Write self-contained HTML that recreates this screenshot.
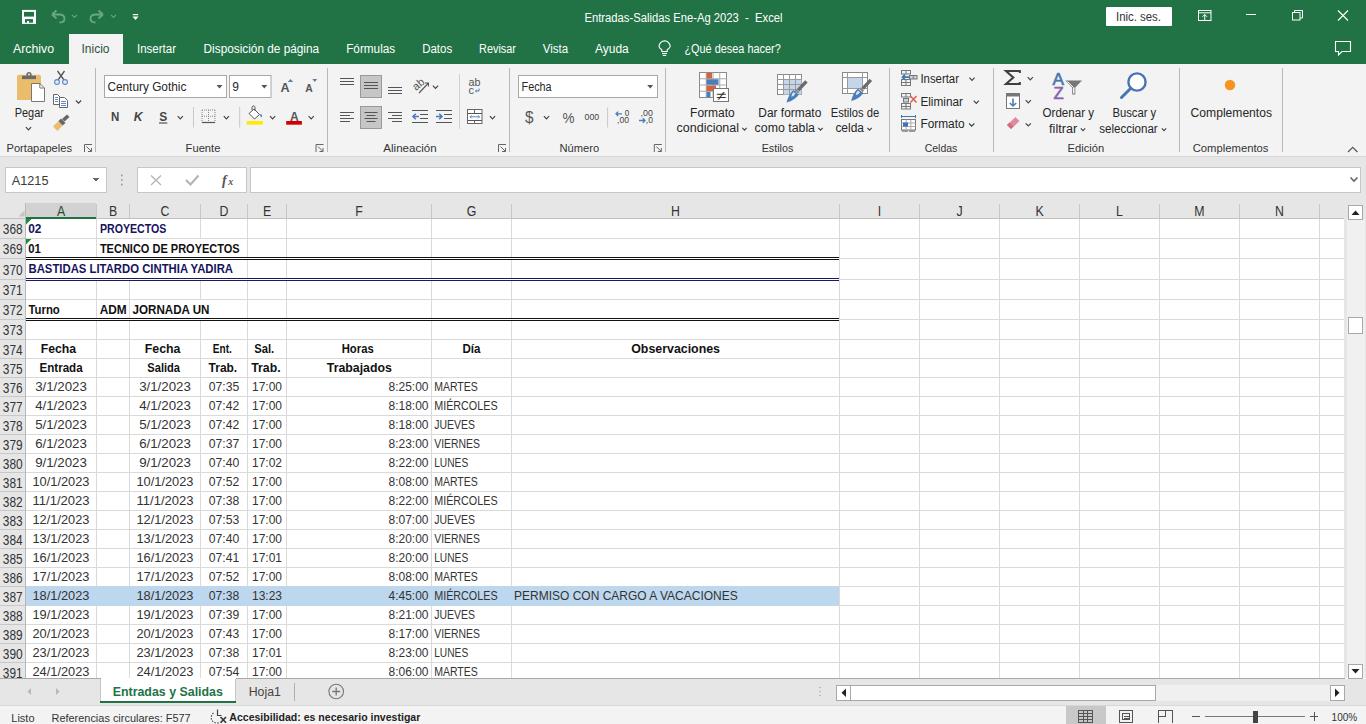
<!DOCTYPE html>
<html><head><meta charset="utf-8"><title>Entradas-Salidas Ene-Ag 2023 - Excel</title>
<style>
html,body{margin:0;padding:0;width:1366px;height:724px;overflow:hidden;background:#fff;}
svg{display:block;font-family:"Liberation Sans", sans-serif;}
text{font-family:"Liberation Sans", sans-serif;}
</style></head><body>
<svg width="1366" height="724" viewBox="0 0 1366 724" shape-rendering="crispEdges">
<rect x="0" y="0" width="1366" height="64" fill="#217346"/>
<g shape-rendering="geometricPrecision">
<rect x="23" y="10.9" width="12" height="12" fill="#ffffff" stroke="#ffffff" stroke-width="2"/>
<rect x="24" y="11.9" width="10" height="4.7" fill="#217346"/>
<rect x="25" y="19.1" width="8" height="3.6" fill="#217346"/>
<rect x="27" y="21" width="2" height="2" fill="#ffffff"/>
<path d="M52 14.5 L56.5 10.5 M52 14.5 L56.5 18.5 M52.5 14.5 L59 14.5 Q64.5 14.5 64.5 18.5 Q64.5 22.5 59.5 22.5" fill="none" stroke="#6aa784" stroke-width="1.8"/>
<path d="M72 15 L74.5 17.3 L77 15" fill="none" stroke="#6aa784" stroke-width="1.1"/>
<path d="M103 14.5 L98.5 10.5 M103 14.5 L98.5 18.5 M102.5 14.5 L96 14.5 Q90.5 14.5 90.5 18.5 Q90.5 22.5 95.5 22.5" fill="none" stroke="#6aa784" stroke-width="1.8"/>
<path d="M111 15 L113.5 17.3 L116 15" fill="none" stroke="#6aa784" stroke-width="1.1"/>
<rect x="132.8" y="14" width="5.4" height="1.2" fill="#ffffff"/>
<path d="M132.5 16.5 L138.5 16.5 L135.5 20 Z" fill="#ffffff"/>
<rect x="1106" y="7" width="66" height="19" fill="#ffffff" rx="1"/>
<text x="1138.5" y="21" font-size="12" fill="#333" text-anchor="middle" textLength="45" lengthAdjust="spacingAndGlyphs">Inic. ses.</text>
<rect x="1198.5" y="10.5" width="12.5" height="10" fill="none" stroke="#ffffff" stroke-width="1"/>
<line x1="1198.5" y1="12.8" x2="1211" y2="12.8" stroke="#ffffff" stroke-width="1"/>
<path d="M1204.75 20.5 L1204.75 14.5 M1202.5 16.8 L1204.75 14.5 L1207 16.8" fill="none" stroke="#ffffff" stroke-width="1"/>
<line x1="1246" y1="14.5" x2="1256" y2="14.5" stroke="#ffffff" stroke-width="1"/>
<rect x="1292.5" y="12.5" width="7.5" height="7.5" fill="none" stroke="#ffffff" stroke-width="1"/>
<path d="M1294.5 12.5 L1294.5 10.5 L1302.5 10.5 L1302.5 18 L1300 18" fill="none" stroke="#ffffff" stroke-width="1"/>
<path d="M1338 10.5 L1348 20.5 M1348 10.5 L1338 20.5" fill="none" stroke="#ffffff" stroke-width="1.1"/>
<path d="M1335.5 41.5 L1350.5 41.5 L1350.5 51.5 L1342 51.5 L1338.5 55 L1338.5 51.5 L1335.5 51.5 Z" fill="none" stroke="#ffffff" stroke-width="1.1"/>
</g>
<text x="584.5" y="22" font-size="12" fill="#ffffff" text-anchor="start" textLength="198" lengthAdjust="spacingAndGlyphs" xml:space="preserve">Entradas-Salidas Ene-Ag 2023  -  Excel</text>
<rect x="69" y="34" width="54" height="30" fill="#f3f3f3"/>
<text x="13" y="53.4" font-size="12.5" fill="#ffffff" text-anchor="start" textLength="41" lengthAdjust="spacingAndGlyphs">Archivo</text>
<text x="81.5" y="53.4" font-size="12.5" fill="#2f4f3e" text-anchor="start" textLength="28" lengthAdjust="spacingAndGlyphs">Inicio</text>
<text x="137" y="53.4" font-size="12.5" fill="#ffffff" text-anchor="start" textLength="39" lengthAdjust="spacingAndGlyphs">Insertar</text>
<text x="203.6" y="53.4" font-size="12.5" fill="#ffffff" text-anchor="start" textLength="115.5" lengthAdjust="spacingAndGlyphs">Disposición de página</text>
<text x="346.2" y="53.4" font-size="12.5" fill="#ffffff" text-anchor="start" textLength="49" lengthAdjust="spacingAndGlyphs">Fórmulas</text>
<text x="422.2" y="53.4" font-size="12.5" fill="#ffffff" text-anchor="start" textLength="30" lengthAdjust="spacingAndGlyphs">Datos</text>
<text x="479" y="53.4" font-size="12.5" fill="#ffffff" text-anchor="start" textLength="37" lengthAdjust="spacingAndGlyphs">Revisar</text>
<text x="542.7" y="53.4" font-size="12.5" fill="#ffffff" text-anchor="start" textLength="25.4" lengthAdjust="spacingAndGlyphs">Vista</text>
<text x="595" y="53.4" font-size="12.5" fill="#ffffff" text-anchor="start" textLength="33.7" lengthAdjust="spacingAndGlyphs">Ayuda</text>
<text x="684.4" y="53.4" font-size="12.5" fill="#ffffff" text-anchor="start" textLength="96.4" lengthAdjust="spacingAndGlyphs">¿Qué desea hacer?</text>
<g shape-rendering="geometricPrecision">
<path d="M661.8 51.5 L661.8 49.8 Q659 47.8 659 46.5 A5.6 5.6 0 1 1 670.2 46.5 Q670 47.8 667.2 49.8 L667.2 51.5 Z" fill="none" stroke="#ffffff" stroke-width="1.1"/>
<line x1="662" y1="53.5" x2="667" y2="53.5" stroke="#ffffff" stroke-width="1.1"/>
<line x1="662.8" y1="55.5" x2="666.2" y2="55.5" stroke="#ffffff" stroke-width="1.1"/>
</g>
<rect x="0" y="64" width="1366" height="92" fill="#f3f3f3"/>
<rect x="0" y="156" width="1366" height="1" fill="#d6d6d6"/>
<line x1="95.5" y1="68" x2="95.5" y2="152" stroke="#b8b8b8" stroke-width="1"/>
<line x1="327.5" y1="68" x2="327.5" y2="152" stroke="#b8b8b8" stroke-width="1"/>
<line x1="509.5" y1="68" x2="509.5" y2="152" stroke="#b8b8b8" stroke-width="1"/>
<line x1="665.5" y1="68" x2="665.5" y2="152" stroke="#b8b8b8" stroke-width="1"/>
<line x1="889.5" y1="68" x2="889.5" y2="152" stroke="#b8b8b8" stroke-width="1"/>
<line x1="993.5" y1="68" x2="993.5" y2="152" stroke="#b8b8b8" stroke-width="1"/>
<line x1="1179.5" y1="68" x2="1179.5" y2="152" stroke="#b8b8b8" stroke-width="1"/>
<line x1="1282.5" y1="68" x2="1282.5" y2="152" stroke="#b8b8b8" stroke-width="1"/>
<text x="6.5" y="151.7" font-size="11.5" fill="#333" text-anchor="start" textLength="65.5" lengthAdjust="spacingAndGlyphs">Portapapeles</text>
<text x="185.6" y="151.7" font-size="11.5" fill="#333" text-anchor="start" textLength="34.8" lengthAdjust="spacingAndGlyphs">Fuente</text>
<text x="383.3" y="151.7" font-size="11.5" fill="#333" text-anchor="start" textLength="53.3" lengthAdjust="spacingAndGlyphs">Alineación</text>
<text x="559.5" y="151.7" font-size="11.5" fill="#333" text-anchor="start" textLength="39.7" lengthAdjust="spacingAndGlyphs">Número</text>
<text x="761.7" y="151.7" font-size="11.5" fill="#333" text-anchor="start" textLength="31.6" lengthAdjust="spacingAndGlyphs">Estilos</text>
<text x="924.7" y="151.7" font-size="11.5" fill="#333" text-anchor="start" textLength="32.7" lengthAdjust="spacingAndGlyphs">Celdas</text>
<text x="1067.6" y="151.7" font-size="11.5" fill="#333" text-anchor="start" textLength="36.7" lengthAdjust="spacingAndGlyphs">Edición</text>
<text x="1192.7" y="151.7" font-size="11.5" fill="#333" text-anchor="start" textLength="75.8" lengthAdjust="spacingAndGlyphs">Complementos</text>
<g shape-rendering="geometricPrecision">
<path d="M84.5 152.0 L84.5 144.5 L92.0 144.5 " fill="none" stroke="#666" stroke-width="1"/>
<path d="M86.5 146.5 L91.5 151.5 M91.5 148.0 L91.5 151.5 L88.0 151.5" fill="none" stroke="#666" stroke-width="1"/>
<path d="M316 152.0 L316 144.5 L323.5 144.5 " fill="none" stroke="#666" stroke-width="1"/>
<path d="M318 146.5 L323 151.5 M323 148.0 L323 151.5 L319.5 151.5" fill="none" stroke="#666" stroke-width="1"/>
<path d="M498.5 152.0 L498.5 144.5 L506.0 144.5 " fill="none" stroke="#666" stroke-width="1"/>
<path d="M500.5 146.5 L505.5 151.5 M505.5 148.0 L505.5 151.5 L502.0 151.5" fill="none" stroke="#666" stroke-width="1"/>
<path d="M654.3 152.0 L654.3 144.5 L661.8 144.5 " fill="none" stroke="#666" stroke-width="1"/>
<path d="M656.3 146.5 L661.3 151.5 M661.3 148.0 L661.3 151.5 L657.8 151.5" fill="none" stroke="#666" stroke-width="1"/>
<path d="M17 76.5 Q17 74.8 18.7 74.8 L39.3 74.8 Q41 74.8 41 76.5 L41 100 L17 100 Z" fill="#e9bd6c"/>
<rect x="22" y="75.7" width="14" height="3.4" fill="#6b6b6b"/>
<circle cx="29" cy="74.6" r="2.6" fill="#6b6b6b"/><circle cx="29" cy="74.6" r="1" fill="#f3f3f3"/>
<path d="M31.5 83.5 L39.8 83.5 L44.5 88 L44.5 101.5 L31.5 101.5 Z" fill="#ffffff" stroke="#777" stroke-width="1"/>
<path d="M39.8 83.5 L39.8 88 L44.5 88" fill="none" stroke="#777" stroke-width="1"/>
<text x="14.7" y="116.5" font-size="12" fill="#262626" text-anchor="start" textLength="29.2" lengthAdjust="spacingAndGlyphs">Pegar</text>
<path d="M25.9 127.2 L28.5 129.8 L31.1 127.2" fill="none" stroke="#444" stroke-width="1.2"/>
<path d="M57.5 71 L64 80 M64.5 71 L58 80" fill="none" stroke="#555" stroke-width="1.3"/>
<circle cx="57" cy="82" r="2.4" fill="#e4ecf6" stroke="#5b8bc9" stroke-width="1.1"/><circle cx="65" cy="82" r="2.4" fill="#e4ecf6" stroke="#5b8bc9" stroke-width="1.1"/>
<path d="M53.5 94.5 L57.5 94.5 L60 97 L60 104.5 L53.5 104.5 Z" fill="#fff" stroke="#666" stroke-width="1"/>
<path d="M59.5 97.5 L64.5 97.5 L67.5 100.5 L67.5 107.5 L59.5 107.5 Z" fill="#fff" stroke="#666" stroke-width="1"/>
<line x1="55" y1="97.5" x2="58" y2="97.5" stroke="#5b8bc9" stroke-width="1"/>
<line x1="55" y1="99.5" x2="58" y2="99.5" stroke="#5b8bc9" stroke-width="1"/>
<line x1="55" y1="101.5" x2="58" y2="101.5" stroke="#5b8bc9" stroke-width="1"/>
<line x1="61" y1="101.5" x2="66" y2="101.5" stroke="#5b8bc9" stroke-width="1"/>
<line x1="61" y1="103.5" x2="66" y2="103.5" stroke="#5b8bc9" stroke-width="1"/>
<line x1="61" y1="105.5" x2="66" y2="105.5" stroke="#5b8bc9" stroke-width="1"/>
<path d="M75.9 100.5 L78.5 103.1 L81.1 100.5" fill="none" stroke="#444" stroke-width="1.2"/>
<path d="M58.5 121 L53 126.5 L57.5 131 L62.5 125.5 Z" fill="#e9bd6c"/>
<path d="M58.5 121 L61 118.5 L65.5 123 L62.5 125.5 Z" fill="#666"/>
<path d="M62 119 L67 114.5 L69.5 117 L64.5 121.5 Z" fill="#666"/>
<rect x="104.5" y="75.5" width="122" height="22" fill="#ffffff" stroke="#a8a8a8" stroke-width="1"/>
<text x="107.4" y="91.2" font-size="12" fill="#262626" text-anchor="start" textLength="79" lengthAdjust="spacingAndGlyphs">Century Gothic</text>
<path d="M216.5 85.0 L222.5 85.0 L219.5 88.5 Z" fill="#555"/>
<rect x="229.5" y="75.5" width="41.5" height="22" fill="#ffffff" stroke="#a8a8a8" stroke-width="1"/>
<text x="232.2" y="91.2" font-size="12" fill="#262626" text-anchor="start">9</text>
<path d="M261.3 85.0 L267.3 85.0 L264.3 88.5 Z" fill="#555"/>
<text x="280.4" y="92" font-size="13.5" fill="#555" font-weight="bold" text-anchor="start" textLength="9.1" lengthAdjust="spacingAndGlyphs">A</text>
<path d="M287.8 82 L293.2 82 L290.5 79 Z" fill="#5a7fa8"/>
<text x="305.2" y="92" font-size="11" fill="#555" font-weight="bold" text-anchor="start" textLength="7.5" lengthAdjust="spacingAndGlyphs">A</text>
<path d="M312.3 79 L317.2 79 L314.75 82 Z" fill="#5a7fa8"/>
<text x="111" y="121.2" font-size="12" fill="#444" font-weight="bold" text-anchor="start" textLength="8.3" lengthAdjust="spacingAndGlyphs">N</text>
<text x="133.8" y="121.2" font-size="12" fill="#444" font-weight="bold" text-anchor="start" textLength="8.8" lengthAdjust="spacingAndGlyphs" font-style="italic">K</text>
<text x="159.2" y="121.2" font-size="12" fill="#444" font-weight="bold" text-anchor="start" textLength="8" lengthAdjust="spacingAndGlyphs">S</text>
<line x1="159" y1="123" x2="167.3" y2="123" stroke="#444" stroke-width="1.1"/>
<path d="M177.70000000000002 116.2 L180.3 118.8 L182.9 116.2" fill="none" stroke="#444" stroke-width="1.2"/>
<line x1="193.5" y1="107" x2="193.5" y2="127.5" stroke="#c8c8c8" stroke-width="1"/>
<path d="M202 110 L215 110 M202 122.5 L215 122.5 M202 110 L202 122.5 M215 110 L215 122.5 M208.5 110 L208.5 122.5 M202 116.25 L215 116.25" fill="none" stroke="#888" stroke-width="1" stroke-dasharray="1 1"/>
<line x1="202" y1="122.5" x2="215" y2="122.5" stroke="#555" stroke-width="1.2"/>
<path d="M223.8 116.2 L226.4 118.8 L229.0 116.2" fill="none" stroke="#444" stroke-width="1.2"/>
<line x1="239.7" y1="107" x2="239.7" y2="127.5" stroke="#c8c8c8" stroke-width="1"/>
<path d="M249 113.5 L254 109 L259.5 114.5 L254.5 119 Z" fill="#fff" stroke="#555" stroke-width="1"/>
<path d="M252 110 L252 107.5 Q252 106 253.5 106 Q255 106 255 107.5 L255 111" fill="none" stroke="#555" stroke-width="1"/>
<path d="M259.5 114.5 Q262.5 113 262 117.5 Q260 116 259.5 114.5 Z" fill="#4a7ebb"/>
<rect x="246.7" y="121" width="16.2" height="3.6" fill="#ffea00"/>
<path d="M270.0 116.2 L272.6 118.8 L275.20000000000005 116.2" fill="none" stroke="#444" stroke-width="1.2"/>
<text x="289.9" y="121" font-size="13.5" fill="#555" font-weight="bold" text-anchor="start" textLength="8.7" lengthAdjust="spacingAndGlyphs">A</text>
<rect x="286.2" y="121" width="15.7" height="3.7" fill="#d40000"/>
<path d="M308.59999999999997 116.2 L311.2 118.8 L313.8 116.2" fill="none" stroke="#444" stroke-width="1.2"/>
<rect x="340" y="78" width="14" height="1" fill="#555"/>
<rect x="340" y="81" width="14" height="1" fill="#555"/>
<rect x="340" y="84" width="14" height="1" fill="#555"/>
<rect x="360.5" y="75.5" width="21" height="22" fill="#c6c6c6" stroke="#9a9a9a" stroke-width="1"/>
<rect x="364" y="82" width="14" height="1" fill="#555"/>
<rect x="364" y="85" width="14" height="1" fill="#555"/>
<rect x="364" y="88" width="14" height="1" fill="#555"/>
<rect x="388" y="87" width="14" height="1" fill="#555"/>
<rect x="388" y="90" width="14" height="1" fill="#555"/>
<rect x="388" y="93" width="14" height="1" fill="#555"/>
<text x="412" y="88" font-size="11" fill="#555" text-anchor="start" transform="rotate(-40 418 84)">ab</text>
<path d="M419 93 L428.5 83 M425 83 L428.5 83 L428.5 86.5" fill="none" stroke="#555" stroke-width="1.1"/>
<path d="M432.9 85.7 L435.5 88.3 L438.1 85.7" fill="none" stroke="#444" stroke-width="1.2"/>
<rect x="459" y="74" width="1" height="55" fill="#d0d0d0"/>
<text x="468.6" y="86" font-size="11" fill="#555" text-anchor="start" textLength="12" lengthAdjust="spacingAndGlyphs">ab</text>
<text x="468.6" y="93.5" font-size="11" fill="#555" text-anchor="start">c</text>
<path d="M479 88.5 L479 91 L475.5 91 M476.8 89.8 L475.5 91 L476.8 92.2" fill="none" stroke="#4a7ebb" stroke-width="1"/>
<rect x="340" y="112" width="14" height="1" fill="#555"/>
<rect x="340" y="115" width="10" height="1" fill="#555"/>
<rect x="340" y="118" width="14" height="1" fill="#555"/>
<rect x="340" y="121" width="10" height="1" fill="#555"/>
<rect x="360.5" y="106.5" width="21" height="22" fill="#c6c6c6" stroke="#9a9a9a" stroke-width="1"/>
<rect x="364.5" y="112" width="13.0" height="1" fill="#555"/>
<rect x="366.5" y="115" width="9.0" height="1" fill="#555"/>
<rect x="364.5" y="118" width="13.0" height="1" fill="#555"/>
<rect x="366.5" y="121" width="9.0" height="1" fill="#555"/>
<rect x="388" y="112" width="14" height="1" fill="#555"/>
<rect x="392" y="115" width="10" height="1" fill="#555"/>
<rect x="388" y="118" width="14" height="1" fill="#555"/>
<rect x="392" y="121" width="10" height="1" fill="#555"/>
<rect x="412" y="110" width="16" height="1" fill="#555"/>
<rect x="412" y="122" width="16" height="1" fill="#555"/>
<rect x="420" y="114" width="8" height="1" fill="#555"/>
<rect x="420" y="118" width="8" height="1" fill="#555"/>
<path d="M419 116.5 L413 116.5 M415.8 113.7 L413 116.5 L415.8 119.3" fill="none" stroke="#4a7ebb" stroke-width="1.6"/>
<rect x="436" y="110" width="16" height="1" fill="#555"/>
<rect x="436" y="122" width="16" height="1" fill="#555"/>
<rect x="444" y="114" width="8" height="1" fill="#555"/>
<rect x="444" y="118" width="8" height="1" fill="#555"/>
<path d="M436 116.5 L442 116.5 M439.2 113.7 L442 116.5 L439.2 119.3" fill="none" stroke="#4a7ebb" stroke-width="1.6"/>
<rect x="467.5" y="109.5" width="14.5" height="14" fill="#fff" stroke="#666" stroke-width="1"/>
<rect x="468" y="113" width="14" height="1" fill="#555"/>
<rect x="468" y="120" width="14" height="1" fill="#555"/>
<rect x="474" y="109.5" width="1" height="3.5" fill="#666"/>
<rect x="474" y="120.5" width="1" height="3" fill="#666"/>
<path d="M470 116.8 L479.5 116.8 M471.5 115.3 L470 116.8 L471.5 118.3 M478 115.3 L479.5 116.8 L478 118.3" fill="none" stroke="#4a7ebb" stroke-width="0.9"/>
<path d="M489.9 116.2 L492.5 118.8 L495.1 116.2" fill="none" stroke="#444" stroke-width="1.2"/>
<rect x="518.5" y="75.5" width="139" height="22" fill="#ffffff" stroke="#a8a8a8" stroke-width="1"/>
<text x="521.6" y="90.8" font-size="12" fill="#262626" text-anchor="start" textLength="30" lengthAdjust="spacingAndGlyphs">Fecha</text>
<path d="M647.2 85.0 L653.2 85.0 L650.2 88.5 Z" fill="#555"/>
<text x="525" y="122.5" font-size="16" fill="#555" text-anchor="start" textLength="8.5" lengthAdjust="spacingAndGlyphs">$</text>
<path d="M543.9 116.2 L546.5 118.8 L549.1 116.2" fill="none" stroke="#444" stroke-width="1.2"/>
<text x="562.5" y="122.6" font-size="14" fill="#555" text-anchor="start" textLength="12" lengthAdjust="spacingAndGlyphs">%</text>
<text x="584.6" y="119.8" font-size="9" fill="#444" text-anchor="start" textLength="14.6" lengthAdjust="spacingAndGlyphs">000</text>
<line x1="607.6" y1="107.5" x2="607.6" y2="127.5" stroke="#c8c8c8" stroke-width="1"/>
<text x="624.8" y="116.2" font-size="8.5" fill="#444" text-anchor="start" textLength="4.5" lengthAdjust="spacingAndGlyphs">0</text>
<text x="617" y="122.8" font-size="8.5" fill="#444" text-anchor="start" textLength="12" lengthAdjust="spacingAndGlyphs">,00</text>
<path d="M622 113.8 L616 113.8 M618.2 111.6 L616 113.8 L618.2 116" fill="none" stroke="#4a7ebb" stroke-width="1.3"/>
<text x="640.6" y="116.2" font-size="8.5" fill="#444" text-anchor="start" textLength="12.3" lengthAdjust="spacingAndGlyphs">,00</text>
<text x="645.8" y="122.8" font-size="8.5" fill="#444" text-anchor="start" textLength="7.1" lengthAdjust="spacingAndGlyphs">,0</text>
<path d="M639 120.5 L645 120.5 M642.8 118.3 L645 120.5 L642.8 122.7" fill="none" stroke="#4a7ebb" stroke-width="1.3"/>
</g>
<g shape-rendering="geometricPrecision">
<rect x="699.5" y="72.5" width="27" height="25" fill="#fff" stroke="#8a8a8a" stroke-width="1"/>
<line x1="706.25" y1="72.5" x2="706.25" y2="97.5" stroke="#a8a8a8" stroke-width="1"/>
<line x1="713.0" y1="72.5" x2="713.0" y2="97.5" stroke="#a8a8a8" stroke-width="1"/>
<line x1="719.75" y1="72.5" x2="719.75" y2="97.5" stroke="#a8a8a8" stroke-width="1"/>
<line x1="699.5" y1="78.75" x2="726.5" y2="78.75" stroke="#a8a8a8" stroke-width="1"/>
<line x1="699.5" y1="85.0" x2="726.5" y2="85.0" stroke="#a8a8a8" stroke-width="1"/>
<line x1="699.5" y1="91.25" x2="726.5" y2="91.25" stroke="#a8a8a8" stroke-width="1"/>
<rect x="706.5" y="73.0" width="5.5" height="5.5" fill="#d5643a"/>
<rect x="706.5" y="79.25" width="12" height="5.5" fill="#4a7ebb"/>
<rect x="706.5" y="85.5" width="9.5" height="5.5" fill="#d5643a"/>
<rect x="706.5" y="91.75" width="4" height="5.5" fill="#4a7ebb"/>
<rect x="713.5" y="88.5" width="15" height="13" fill="#fff" stroke="#777" stroke-width="1"/>
<text x="716" y="99.5" font-size="13" fill="#333" text-anchor="start" textLength="10" lengthAdjust="spacingAndGlyphs">≠</text>
<text x="690.1" y="116.5" font-size="12" fill="#262626" text-anchor="start" textLength="44.6" lengthAdjust="spacingAndGlyphs">Formato</text>
<text x="676.6" y="132.2" font-size="12" fill="#262626" text-anchor="start" textLength="62.4" lengthAdjust="spacingAndGlyphs">condicional</text>
<path d="M742.3 127.9 L744.5 130.1 L746.7 127.9" fill="none" stroke="#444" stroke-width="1.2"/>
<rect x="777.5" y="74.5" width="24" height="20" fill="#fff" stroke="#8a8a8a" stroke-width="1"/>
<rect x="783.5" y="79.5" width="18" height="15" fill="#c5d6ea"/>
<line x1="783.5" y1="74.5" x2="783.5" y2="94.5" stroke="#9a9a9a" stroke-width="1"/>
<line x1="789.5" y1="74.5" x2="789.5" y2="94.5" stroke="#9a9a9a" stroke-width="1"/>
<line x1="795.5" y1="74.5" x2="795.5" y2="94.5" stroke="#9a9a9a" stroke-width="1"/>
<line x1="777.5" y1="79.5" x2="801.5" y2="79.5" stroke="#9a9a9a" stroke-width="1"/>
<line x1="777.5" y1="84.5" x2="801.5" y2="84.5" stroke="#9a9a9a" stroke-width="1"/>
<line x1="777.5" y1="89.5" x2="801.5" y2="89.5" stroke="#9a9a9a" stroke-width="1"/>
<g transform="translate(796.5 92) rotate(-47)"><rect x="2.5" y="-1.7" width="12" height="3.4" fill="#6b6b6b"/><rect x="0" y="-2.2" width="2" height="4.4" fill="#8a8a8a"/><path d="M-0.5 -3.6 L-0.5 3.6 Q-7 4.5 -14.5 0 Q-7 -4.5 -0.5 -3.6 Z" fill="#4a7ebb"/><path d="M-2 -2.2 L-2 0.5 Q-5 1 -7 -0.5 Q-5 -2.5 -2 -2.2 Z" fill="#d6e4f4"/></g>
<text x="758.3" y="116.5" font-size="12" fill="#262626" text-anchor="start" textLength="63" lengthAdjust="spacingAndGlyphs">Dar formato</text>
<text x="754.6" y="132.2" font-size="12" fill="#262626" text-anchor="start" textLength="60.4" lengthAdjust="spacingAndGlyphs">como tabla</text>
<path d="M818.3 127.9 L820.5 130.1 L822.7 127.9" fill="none" stroke="#444" stroke-width="1.2"/>
<rect x="842.5" y="72.5" width="25" height="21" fill="#fff" stroke="#8a8a8a" stroke-width="1"/>
<rect x="847.5" y="77.5" width="15" height="11" fill="#c5d6ea"/>
<line x1="842.5" y1="77.5" x2="867.5" y2="77.5" stroke="#9a9a9a" stroke-width="1"/>
<line x1="842.5" y1="88.5" x2="867.5" y2="88.5" stroke="#9a9a9a" stroke-width="1"/>
<line x1="847.5" y1="72.5" x2="847.5" y2="93.5" stroke="#9a9a9a" stroke-width="1"/>
<line x1="862.5" y1="72.5" x2="862.5" y2="93.5" stroke="#9a9a9a" stroke-width="1"/>
<g transform="translate(861 90.5) rotate(-47)"><rect x="2.5" y="-1.7" width="12" height="3.4" fill="#6b6b6b"/><rect x="0" y="-2.2" width="2" height="4.4" fill="#8a8a8a"/><path d="M-0.5 -3.6 L-0.5 3.6 Q-7 4.5 -14.5 0 Q-7 -4.5 -0.5 -3.6 Z" fill="#4a7ebb"/><path d="M-2 -2.2 L-2 0.5 Q-5 1 -7 -0.5 Q-5 -2.5 -2 -2.2 Z" fill="#d6e4f4"/></g>
<text x="830.7" y="116.5" font-size="12" fill="#262626" text-anchor="start" textLength="48.5" lengthAdjust="spacingAndGlyphs">Estilos de</text>
<text x="835.4" y="132.2" font-size="12" fill="#262626" text-anchor="start" textLength="28.6" lengthAdjust="spacingAndGlyphs">celda</text>
<path d="M867.3 127.9 L869.5 130.1 L871.7 127.9" fill="none" stroke="#444" stroke-width="1.2"/>
<rect x="901.5" y="70.5" width="9" height="3.5" fill="none" stroke="#777" stroke-width="1"/>
<line x1="906.0" y1="70.5" x2="906.0" y2="74.0" stroke="#777" stroke-width="1"/>
<rect x="901.5" y="79.5" width="9" height="3" fill="none" stroke="#777" stroke-width="1"/>
<line x1="906.0" y1="79.5" x2="906.0" y2="82.5" stroke="#777" stroke-width="1"/>
<rect x="901.5" y="82.5" width="9" height="3" fill="none" stroke="#777" stroke-width="1"/>
<line x1="906.0" y1="82.5" x2="906.0" y2="85.5" stroke="#777" stroke-width="1"/>
<rect x="909.5" y="75.5" width="7.5" height="3.5" fill="#c9d5e3" stroke="#777" stroke-width="1"/>
<line x1="913.25" y1="75.5" x2="913.25" y2="79.0" stroke="#777" stroke-width="1"/>
<g shape-rendering="geometricPrecision">
<path d="M909 77.2 L902.5 77.2 M905 74.6 L902.5 77.2 L905 79.8" fill="none" stroke="#3b74b8" stroke-width="1.7"/>
</g>
<text x="920.4" y="82.8" font-size="12" fill="#262626" text-anchor="start" textLength="38.6" lengthAdjust="spacingAndGlyphs">Insertar</text>
<path d="M969.4 77.7 L972 80.3 L974.6 77.7" fill="none" stroke="#444" stroke-width="1.2"/>
<rect x="901.5" y="93.5" width="9" height="3.5" fill="none" stroke="#777" stroke-width="1"/>
<line x1="906.0" y1="93.5" x2="906.0" y2="97.0" stroke="#777" stroke-width="1"/>
<rect x="901.5" y="103.5" width="9" height="3" fill="none" stroke="#777" stroke-width="1"/>
<line x1="906.0" y1="103.5" x2="906.0" y2="106.5" stroke="#777" stroke-width="1"/>
<rect x="901.5" y="106.5" width="9" height="2.5" fill="none" stroke="#777" stroke-width="1"/>
<line x1="906.0" y1="106.5" x2="906.0" y2="109.0" stroke="#777" stroke-width="1"/>
<rect x="903.5" y="98.5" width="5" height="3.5" fill="#c9d5e3" stroke="#777" stroke-width="1"/>
<g shape-rendering="geometricPrecision">
<path d="M910.5 96 L916.5 102.5 M916.5 96 L910.5 102.5" fill="none" stroke="#e0604c" stroke-width="1.5"/>
</g>
<text x="920.4" y="105.8" font-size="12" fill="#262626" text-anchor="start" textLength="42.5" lengthAdjust="spacingAndGlyphs">Eliminar</text>
<path d="M973.6999999999999 100.7 L976.3 103.3 L978.9 100.7" fill="none" stroke="#444" stroke-width="1.2"/>
<rect x="901.5" y="119.5" width="14" height="10.5" fill="#fff" stroke="#777" stroke-width="1"/>
<line x1="906.17" y1="119.5" x2="906.17" y2="130" stroke="#aaa" stroke-width="1"/>
<line x1="910.84" y1="119.5" x2="910.84" y2="130" stroke="#aaa" stroke-width="1"/>
<line x1="901.5" y1="123.0" x2="915.5" y2="123.0" stroke="#aaa" stroke-width="1"/>
<line x1="901.5" y1="126.5" x2="915.5" y2="126.5" stroke="#aaa" stroke-width="1"/>
<rect x="903" y="122.5" width="5" height="4" fill="#3b74b8"/>
<rect x="902" y="130.5" width="6" height="1.2" fill="#777"/>
<rect x="909" y="130.5" width="6" height="1.2" fill="#777"/>
<line x1="902" y1="116.5" x2="915" y2="116.5" stroke="#3b74b8" stroke-width="1"/>
<line x1="901.5" y1="115" x2="901.5" y2="118" stroke="#3b74b8" stroke-width="1"/>
<line x1="915.5" y1="115" x2="915.5" y2="118" stroke="#3b74b8" stroke-width="1"/>
<text x="920.4" y="128.3" font-size="12" fill="#262626" text-anchor="start" textLength="44.2" lengthAdjust="spacingAndGlyphs">Formato</text>
<path d="M969.1 123.5 L971.7 126.1 L974.3000000000001 123.5" fill="none" stroke="#444" stroke-width="1.2"/>
<g shape-rendering="geometricPrecision">
<path d="M1019.8 73 L1019.8 71 L1006 71 L1013.3 77.5 L1006 84 L1019.8 84 L1019.8 82" fill="none" stroke="#404040" stroke-width="2.1" stroke-linejoin="miter"/>
</g>
<path d="M1027.7 77.2 L1030.3 79.8 L1032.8999999999999 77.2" fill="none" stroke="#444" stroke-width="1.2"/>
<rect x="1006.5" y="93.5" width="13" height="15" fill="#fff" stroke="#777" stroke-width="1"/>
<rect x="1006.5" y="93.5" width="13" height="3" fill="#777"/>
<path d="M1013 98.5 L1013 106 M1009.8 103 L1013 106 L1016.2 103" fill="none" stroke="#4a7ebb" stroke-width="1.6"/>
<path d="M1025.7 100.2 L1028.3 102.8 L1030.8999999999999 100.2" fill="none" stroke="#444" stroke-width="1.2"/>
<path d="M1007 125 L1015.5 117 L1019.5 121 L1011 129 Z" fill="#e08a9e"/>
<path d="M1007 125 L1009.5 122.6 L1013.5 126.6 L1011 129 Z" fill="#d36a82"/>
<path d="M1025.7 123.4 L1028.3 126.0 L1030.8999999999999 123.4" fill="none" stroke="#444" stroke-width="1.2"/>
<text x="1052.6" y="84.6" font-size="16" fill="#4a74b0" text-anchor="start" textLength="11.5" lengthAdjust="spacingAndGlyphs" stroke="#4a74b0" stroke-width="0.6">A</text>
<text x="1053.6" y="98.7" font-size="16" fill="#8b64b0" text-anchor="start" textLength="10.2" lengthAdjust="spacingAndGlyphs" stroke="#8b64b0" stroke-width="0.6">Z</text>
<path d="M1065.5 80.5 L1082 80.5 L1075.3 87.5 L1075.3 94.5 L1072.2 94.5 L1072.2 87.5 Z" fill="#777"/>
<rect x="1073" y="87.5" width="1.5" height="6" fill="#f3f3f3"/>
<path d="M1067.5 81.5 L1073.5 87.5" fill="none" stroke="#f3f3f3" stroke-width="1"/>
<text x="1042.6" y="116.9" font-size="12" fill="#262626" text-anchor="start" textLength="51.4" lengthAdjust="spacingAndGlyphs">Ordenar y</text>
<text x="1049.1" y="132.9" font-size="12" fill="#262626" text-anchor="start" textLength="28" lengthAdjust="spacingAndGlyphs">filtrar</text>
<path d="M1080.8 128.4 L1083 130.6 L1085.2 128.4" fill="none" stroke="#444" stroke-width="1.2"/>
<circle cx="1137" cy="82" r="8.6" fill="#fff" stroke="#4a74b0" stroke-width="2.4"/>
<path d="M1130.8 88.2 L1121.5 97.5" fill="none" stroke="#4a74b0" stroke-width="3" stroke-linecap="round"/>
<text x="1112.4" y="116.9" font-size="12" fill="#262626" text-anchor="start" textLength="43.8" lengthAdjust="spacingAndGlyphs">Buscar y</text>
<text x="1099.2" y="132.9" font-size="12" fill="#262626" text-anchor="start" textLength="58.5" lengthAdjust="spacingAndGlyphs">seleccionar</text>
<path d="M1161.8 128.4 L1164 130.6 L1166.2 128.4" fill="none" stroke="#444" stroke-width="1.2"/>
<circle cx="1230" cy="85" r="5.2" fill="#f7941d"/>
<text x="1190.6" y="116.9" font-size="12" fill="#262626" text-anchor="start" textLength="81.4" lengthAdjust="spacingAndGlyphs">Complementos</text>
<path d="M1348 152 L1352.7 147.3 L1357.4 152" fill="none" stroke="#555" stroke-width="1.2"/>
</g>
<rect x="0" y="157" width="1366" height="46" fill="#e6e6e6"/>
<rect x="5.5" y="167.5" width="101" height="25" fill="#ffffff" stroke="#c6c6c6" stroke-width="1"/>
<text x="11.8" y="184.7" font-size="12.5" fill="#3a3a3a" text-anchor="start" textLength="36.7" lengthAdjust="spacingAndGlyphs">A1215</text>
<path d="M92.7 177.8 L99.7 177.8 L96.2 181.3 Z" fill="#666"/>
<g shape-rendering="geometricPrecision">
<circle cx="121.8" cy="175.5" r="0.9" fill="#9a9a9a"/>
<circle cx="121.8" cy="180" r="0.9" fill="#9a9a9a"/>
<circle cx="121.8" cy="184.5" r="0.9" fill="#9a9a9a"/>
</g>
<rect x="137.5" y="167.5" width="109" height="25" fill="#ffffff" stroke="#c6c6c6" stroke-width="1"/>
<g shape-rendering="geometricPrecision">
<path d="M151 175.5 L161 185 M161 175.5 L151 185" fill="none" stroke="#b4b4b4" stroke-width="1.3"/>
<path d="M186 180 L190.5 184.5 L198.5 175.5" fill="none" stroke="#b4b4b4" stroke-width="2.2"/>
</g>
<text x="222" y="185" font-size="14" fill="#555" font-weight="bold" text-anchor="start" font-style="italic" style="font-family:'Liberation Serif',serif">f</text>
<text x="228.2" y="184.5" font-size="10" fill="#555" font-weight="bold" text-anchor="start" font-style="italic" style="font-family:'Liberation Serif',serif">x</text>
<rect x="250.5" y="167.5" width="1110" height="25" fill="#ffffff" stroke="#c6c6c6" stroke-width="1"/>
<g shape-rendering="geometricPrecision">
<path d="M1350.5 177.5 L1354 181 L1357.5 177.5" fill="none" stroke="#666" stroke-width="1.6"/>
</g>
<rect x="0" y="203" width="1344" height="16" fill="#e6e6e6"/>
<rect x="25" y="203" width="71" height="15" fill="#d2d2d2"/>
<g shape-rendering="geometricPrecision">
<path d="M24.5 216.5 L24.5 210.5 L18.5 216.5 Z" fill="#c4c4c4"/>
</g>
<line x1="96.5" y1="204" x2="96.5" y2="219" stroke="#c8c8c8" stroke-width="1"/>
<line x1="129.5" y1="204" x2="129.5" y2="219" stroke="#c8c8c8" stroke-width="1"/>
<line x1="200.5" y1="204" x2="200.5" y2="219" stroke="#c8c8c8" stroke-width="1"/>
<line x1="247.5" y1="204" x2="247.5" y2="219" stroke="#c8c8c8" stroke-width="1"/>
<line x1="286.5" y1="204" x2="286.5" y2="219" stroke="#c8c8c8" stroke-width="1"/>
<line x1="431.5" y1="204" x2="431.5" y2="219" stroke="#c8c8c8" stroke-width="1"/>
<line x1="511.5" y1="204" x2="511.5" y2="219" stroke="#c8c8c8" stroke-width="1"/>
<line x1="839.5" y1="204" x2="839.5" y2="219" stroke="#c8c8c8" stroke-width="1"/>
<line x1="919.5" y1="204" x2="919.5" y2="219" stroke="#c8c8c8" stroke-width="1"/>
<line x1="999.5" y1="204" x2="999.5" y2="219" stroke="#c8c8c8" stroke-width="1"/>
<line x1="1079.5" y1="204" x2="1079.5" y2="219" stroke="#c8c8c8" stroke-width="1"/>
<line x1="1159.5" y1="204" x2="1159.5" y2="219" stroke="#c8c8c8" stroke-width="1"/>
<line x1="1239.5" y1="204" x2="1239.5" y2="219" stroke="#c8c8c8" stroke-width="1"/>
<line x1="1319.5" y1="204" x2="1319.5" y2="219" stroke="#c8c8c8" stroke-width="1"/>
<line x1="0" y1="218.5" x2="1344" y2="218.5" stroke="#c0c0c0" stroke-width="1"/>
<rect x="25" y="217" width="71" height="2" fill="#217346"/>
<text x="61.0" y="215.8" font-size="14" fill="#1f5130" text-anchor="middle" textLength="8.22" lengthAdjust="spacingAndGlyphs">A</text>
<text x="113.0" y="215.8" font-size="14" fill="#333333" text-anchor="middle" textLength="8.22" lengthAdjust="spacingAndGlyphs">B</text>
<text x="165.0" y="215.8" font-size="14" fill="#333333" text-anchor="middle" textLength="8.9" lengthAdjust="spacingAndGlyphs">C</text>
<text x="224.0" y="215.8" font-size="14" fill="#333333" text-anchor="middle" textLength="8.9" lengthAdjust="spacingAndGlyphs">D</text>
<text x="267.0" y="215.8" font-size="14" fill="#333333" text-anchor="middle" textLength="8.22" lengthAdjust="spacingAndGlyphs">E</text>
<text x="359.0" y="215.8" font-size="14" fill="#333333" text-anchor="middle" textLength="7.53" lengthAdjust="spacingAndGlyphs">F</text>
<text x="471.5" y="215.8" font-size="14" fill="#333333" text-anchor="middle" textLength="9.58" lengthAdjust="spacingAndGlyphs">G</text>
<text x="675.5" y="215.8" font-size="14" fill="#333333" text-anchor="middle" textLength="8.9" lengthAdjust="spacingAndGlyphs">H</text>
<text x="879.5" y="215.8" font-size="14" fill="#333333" text-anchor="middle" textLength="3.42" lengthAdjust="spacingAndGlyphs">I</text>
<text x="959.5" y="215.8" font-size="14" fill="#333333" text-anchor="middle" textLength="6.16" lengthAdjust="spacingAndGlyphs">J</text>
<text x="1039.5" y="215.8" font-size="14" fill="#333333" text-anchor="middle" textLength="8.22" lengthAdjust="spacingAndGlyphs">K</text>
<text x="1119.5" y="215.8" font-size="14" fill="#333333" text-anchor="middle" textLength="6.85" lengthAdjust="spacingAndGlyphs">L</text>
<text x="1199.5" y="215.8" font-size="14" fill="#333333" text-anchor="middle" textLength="10.26" lengthAdjust="spacingAndGlyphs">M</text>
<text x="1279.5" y="215.8" font-size="14" fill="#333333" text-anchor="middle" textLength="8.9" lengthAdjust="spacingAndGlyphs">N</text>
<rect x="25" y="219" width="1319" height="459" fill="#ffffff"/>
<rect x="0" y="219" width="25" height="459" fill="#e6e6e6"/>
<line x1="25.5" y1="203" x2="25.5" y2="678" stroke="#b8b8b8" stroke-width="1"/>
<line x1="0" y1="238.5" x2="25" y2="238.5" stroke="#c8c8c8" stroke-width="1"/>
<line x1="26" y1="238.5" x2="1344" y2="238.5" stroke="#dadada" stroke-width="1"/>
<line x1="0" y1="258.5" x2="25" y2="258.5" stroke="#c8c8c8" stroke-width="1"/>
<line x1="26" y1="258.5" x2="1344" y2="258.5" stroke="#dadada" stroke-width="1"/>
<line x1="0" y1="279.5" x2="25" y2="279.5" stroke="#c8c8c8" stroke-width="1"/>
<line x1="26" y1="279.5" x2="1344" y2="279.5" stroke="#dadada" stroke-width="1"/>
<line x1="0" y1="299.5" x2="25" y2="299.5" stroke="#c8c8c8" stroke-width="1"/>
<line x1="26" y1="299.5" x2="1344" y2="299.5" stroke="#dadada" stroke-width="1"/>
<line x1="0" y1="319.5" x2="25" y2="319.5" stroke="#c8c8c8" stroke-width="1"/>
<line x1="26" y1="319.5" x2="1344" y2="319.5" stroke="#dadada" stroke-width="1"/>
<line x1="0" y1="339.5" x2="25" y2="339.5" stroke="#c8c8c8" stroke-width="1"/>
<line x1="26" y1="339.5" x2="1344" y2="339.5" stroke="#dadada" stroke-width="1"/>
<line x1="0" y1="358.5" x2="25" y2="358.5" stroke="#c8c8c8" stroke-width="1"/>
<line x1="26" y1="358.5" x2="1344" y2="358.5" stroke="#dadada" stroke-width="1"/>
<line x1="0" y1="377.5" x2="25" y2="377.5" stroke="#c8c8c8" stroke-width="1"/>
<line x1="26" y1="377.5" x2="1344" y2="377.5" stroke="#dadada" stroke-width="1"/>
<line x1="0" y1="396.5" x2="25" y2="396.5" stroke="#c8c8c8" stroke-width="1"/>
<line x1="26" y1="396.5" x2="1344" y2="396.5" stroke="#dadada" stroke-width="1"/>
<line x1="0" y1="415.5" x2="25" y2="415.5" stroke="#c8c8c8" stroke-width="1"/>
<line x1="26" y1="415.5" x2="1344" y2="415.5" stroke="#dadada" stroke-width="1"/>
<line x1="0" y1="434.5" x2="25" y2="434.5" stroke="#c8c8c8" stroke-width="1"/>
<line x1="26" y1="434.5" x2="1344" y2="434.5" stroke="#dadada" stroke-width="1"/>
<line x1="0" y1="453.5" x2="25" y2="453.5" stroke="#c8c8c8" stroke-width="1"/>
<line x1="26" y1="453.5" x2="1344" y2="453.5" stroke="#dadada" stroke-width="1"/>
<line x1="0" y1="472.5" x2="25" y2="472.5" stroke="#c8c8c8" stroke-width="1"/>
<line x1="26" y1="472.5" x2="1344" y2="472.5" stroke="#dadada" stroke-width="1"/>
<line x1="0" y1="491.5" x2="25" y2="491.5" stroke="#c8c8c8" stroke-width="1"/>
<line x1="26" y1="491.5" x2="1344" y2="491.5" stroke="#dadada" stroke-width="1"/>
<line x1="0" y1="510.5" x2="25" y2="510.5" stroke="#c8c8c8" stroke-width="1"/>
<line x1="26" y1="510.5" x2="1344" y2="510.5" stroke="#dadada" stroke-width="1"/>
<line x1="0" y1="529.5" x2="25" y2="529.5" stroke="#c8c8c8" stroke-width="1"/>
<line x1="26" y1="529.5" x2="1344" y2="529.5" stroke="#dadada" stroke-width="1"/>
<line x1="0" y1="548.5" x2="25" y2="548.5" stroke="#c8c8c8" stroke-width="1"/>
<line x1="26" y1="548.5" x2="1344" y2="548.5" stroke="#dadada" stroke-width="1"/>
<line x1="0" y1="567.5" x2="25" y2="567.5" stroke="#c8c8c8" stroke-width="1"/>
<line x1="26" y1="567.5" x2="1344" y2="567.5" stroke="#dadada" stroke-width="1"/>
<line x1="0" y1="586.5" x2="25" y2="586.5" stroke="#c8c8c8" stroke-width="1"/>
<line x1="26" y1="586.5" x2="1344" y2="586.5" stroke="#dadada" stroke-width="1"/>
<line x1="0" y1="605.5" x2="25" y2="605.5" stroke="#c8c8c8" stroke-width="1"/>
<line x1="26" y1="605.5" x2="1344" y2="605.5" stroke="#dadada" stroke-width="1"/>
<line x1="0" y1="624.5" x2="25" y2="624.5" stroke="#c8c8c8" stroke-width="1"/>
<line x1="26" y1="624.5" x2="1344" y2="624.5" stroke="#dadada" stroke-width="1"/>
<line x1="0" y1="643.5" x2="25" y2="643.5" stroke="#c8c8c8" stroke-width="1"/>
<line x1="26" y1="643.5" x2="1344" y2="643.5" stroke="#dadada" stroke-width="1"/>
<line x1="0" y1="662.5" x2="25" y2="662.5" stroke="#c8c8c8" stroke-width="1"/>
<line x1="26" y1="662.5" x2="1344" y2="662.5" stroke="#dadada" stroke-width="1"/>
<line x1="0" y1="681.5" x2="25" y2="681.5" stroke="#c8c8c8" stroke-width="1"/>
<line x1="26" y1="681.5" x2="1344" y2="681.5" stroke="#dadada" stroke-width="1"/>
<line x1="96.5" y1="219" x2="96.5" y2="678" stroke="#dadada" stroke-width="1"/>
<line x1="129.5" y1="219" x2="129.5" y2="678" stroke="#dadada" stroke-width="1"/>
<line x1="200.5" y1="219" x2="200.5" y2="678" stroke="#dadada" stroke-width="1"/>
<line x1="247.5" y1="219" x2="247.5" y2="678" stroke="#dadada" stroke-width="1"/>
<line x1="286.5" y1="219" x2="286.5" y2="678" stroke="#dadada" stroke-width="1"/>
<line x1="431.5" y1="219" x2="431.5" y2="678" stroke="#dadada" stroke-width="1"/>
<line x1="511.5" y1="219" x2="511.5" y2="678" stroke="#dadada" stroke-width="1"/>
<line x1="839.5" y1="219" x2="839.5" y2="678" stroke="#dadada" stroke-width="1"/>
<line x1="919.5" y1="219" x2="919.5" y2="678" stroke="#dadada" stroke-width="1"/>
<line x1="999.5" y1="219" x2="999.5" y2="678" stroke="#dadada" stroke-width="1"/>
<line x1="1079.5" y1="219" x2="1079.5" y2="678" stroke="#dadada" stroke-width="1"/>
<line x1="1159.5" y1="219" x2="1159.5" y2="678" stroke="#dadada" stroke-width="1"/>
<line x1="1239.5" y1="219" x2="1239.5" y2="678" stroke="#dadada" stroke-width="1"/>
<line x1="1319.5" y1="219" x2="1319.5" y2="678" stroke="#dadada" stroke-width="1"/>
<text x="22.6" y="234.3" font-size="14" fill="#333" text-anchor="end" textLength="19.8" lengthAdjust="spacingAndGlyphs">368</text>
<text x="22.6" y="254.3" font-size="14" fill="#333" text-anchor="end" textLength="19.8" lengthAdjust="spacingAndGlyphs">369</text>
<text x="22.6" y="274.8" font-size="14" fill="#333" text-anchor="end" textLength="19.8" lengthAdjust="spacingAndGlyphs">370</text>
<text x="22.6" y="295.3" font-size="14" fill="#333" text-anchor="end" textLength="19.8" lengthAdjust="spacingAndGlyphs">371</text>
<text x="22.6" y="315.3" font-size="14" fill="#333" text-anchor="end" textLength="19.8" lengthAdjust="spacingAndGlyphs">372</text>
<text x="22.6" y="335.3" font-size="14" fill="#333" text-anchor="end" textLength="19.8" lengthAdjust="spacingAndGlyphs">373</text>
<text x="22.6" y="354.8" font-size="14" fill="#333" text-anchor="end" textLength="19.8" lengthAdjust="spacingAndGlyphs">374</text>
<text x="22.6" y="373.8" font-size="14" fill="#333" text-anchor="end" textLength="19.8" lengthAdjust="spacingAndGlyphs">375</text>
<text x="22.6" y="392.8" font-size="14" fill="#333" text-anchor="end" textLength="19.8" lengthAdjust="spacingAndGlyphs">376</text>
<text x="22.6" y="411.8" font-size="14" fill="#333" text-anchor="end" textLength="19.8" lengthAdjust="spacingAndGlyphs">377</text>
<text x="22.6" y="430.8" font-size="14" fill="#333" text-anchor="end" textLength="19.8" lengthAdjust="spacingAndGlyphs">378</text>
<text x="22.6" y="449.8" font-size="14" fill="#333" text-anchor="end" textLength="19.8" lengthAdjust="spacingAndGlyphs">379</text>
<text x="22.6" y="468.8" font-size="14" fill="#333" text-anchor="end" textLength="19.8" lengthAdjust="spacingAndGlyphs">380</text>
<text x="22.6" y="487.8" font-size="14" fill="#333" text-anchor="end" textLength="19.8" lengthAdjust="spacingAndGlyphs">381</text>
<text x="22.6" y="506.8" font-size="14" fill="#333" text-anchor="end" textLength="19.8" lengthAdjust="spacingAndGlyphs">382</text>
<text x="22.6" y="525.8" font-size="14" fill="#333" text-anchor="end" textLength="19.8" lengthAdjust="spacingAndGlyphs">383</text>
<text x="22.6" y="544.8" font-size="14" fill="#333" text-anchor="end" textLength="19.8" lengthAdjust="spacingAndGlyphs">384</text>
<text x="22.6" y="563.8" font-size="14" fill="#333" text-anchor="end" textLength="19.8" lengthAdjust="spacingAndGlyphs">385</text>
<text x="22.6" y="582.8" font-size="14" fill="#333" text-anchor="end" textLength="19.8" lengthAdjust="spacingAndGlyphs">386</text>
<text x="22.6" y="601.8" font-size="14" fill="#333" text-anchor="end" textLength="19.8" lengthAdjust="spacingAndGlyphs">387</text>
<text x="22.6" y="620.8" font-size="14" fill="#333" text-anchor="end" textLength="19.8" lengthAdjust="spacingAndGlyphs">388</text>
<text x="22.6" y="639.8" font-size="14" fill="#333" text-anchor="end" textLength="19.8" lengthAdjust="spacingAndGlyphs">389</text>
<text x="22.6" y="658.8" font-size="14" fill="#333" text-anchor="end" textLength="19.8" lengthAdjust="spacingAndGlyphs">390</text>
<text x="22.6" y="677.8" font-size="14" fill="#333" text-anchor="end" textLength="19.8" lengthAdjust="spacingAndGlyphs">391</text>
<rect x="129" y="219" width="1" height="19" fill="#ffffff"/>
<rect x="129" y="239" width="1" height="19" fill="#ffffff"/>
<rect x="200" y="239" width="1" height="19" fill="#ffffff"/>
<rect x="96" y="259" width="1" height="20" fill="#ffffff"/>
<rect x="129" y="259" width="1" height="20" fill="#ffffff"/>
<rect x="200" y="259" width="1" height="20" fill="#ffffff"/>
<rect x="200" y="300" width="1" height="19" fill="#ffffff"/>
<rect x="26" y="586" width="813" height="20" fill="#bdd7ee"/>
<rect x="26" y="257" width="813" height="1" fill="#111111"/>
<rect x="26" y="258" width="813" height="1" fill="#ffffff"/>
<rect x="26" y="259" width="813" height="1" fill="#111111"/>
<rect x="26" y="278" width="813" height="1" fill="#1b1a5c"/>
<rect x="26" y="279" width="813" height="1" fill="#ffffff"/>
<rect x="26" y="280" width="813" height="1" fill="#1b1a5c"/>
<rect x="26" y="318" width="813" height="1" fill="#111111"/>
<rect x="26" y="319" width="813" height="1" fill="#ffffff"/>
<rect x="26" y="320" width="813" height="1" fill="#111111"/>
<g shape-rendering="geometricPrecision">
<path d="M26 219 L31.5 219 L26 224.5 Z" fill="#1e8c3a"/>
<path d="M26 239 L31.5 239 L26 244.5 Z" fill="#1e8c3a"/>
</g>
<text x="28.2" y="233" font-size="12" fill="#17135c" font-weight="bold" text-anchor="start" textLength="13.2" lengthAdjust="spacingAndGlyphs">02</text>
<text x="99.9" y="233" font-size="12" fill="#17135c" font-weight="bold" text-anchor="start" textLength="66.5" lengthAdjust="spacingAndGlyphs">PROYECTOS</text>
<text x="28.2" y="253" font-size="12" fill="#111111" font-weight="bold" text-anchor="start" textLength="12.6" lengthAdjust="spacingAndGlyphs">01</text>
<text x="99.9" y="253" font-size="12" fill="#111111" font-weight="bold" text-anchor="start" textLength="139.8" lengthAdjust="spacingAndGlyphs">TECNICO DE PROYECTOS</text>
<text x="28.5" y="273" font-size="12" fill="#17135c" font-weight="bold" text-anchor="start" textLength="204.5" lengthAdjust="spacingAndGlyphs">BASTIDAS LITARDO CINTHIA YADIRA</text>
<text x="28.5" y="314" font-size="12" fill="#111111" font-weight="bold" text-anchor="start" textLength="31.3" lengthAdjust="spacingAndGlyphs">Turno</text>
<text x="99.7" y="314" font-size="12" fill="#111111" font-weight="bold" text-anchor="start" textLength="27" lengthAdjust="spacingAndGlyphs">ADM</text>
<text x="132.5" y="314" font-size="12" fill="#111111" font-weight="bold" text-anchor="start" textLength="77" lengthAdjust="spacingAndGlyphs">JORNADA UN</text>
<text x="58.4" y="353" font-size="12" fill="#111111" font-weight="bold" text-anchor="middle" textLength="35.4" lengthAdjust="spacingAndGlyphs">Fecha</text>
<text x="61.1" y="372" font-size="12" fill="#111111" font-weight="bold" text-anchor="middle" textLength="43" lengthAdjust="spacingAndGlyphs">Entrada</text>
<text x="162.6" y="353" font-size="12" fill="#111111" font-weight="bold" text-anchor="middle" textLength="35.7" lengthAdjust="spacingAndGlyphs">Fecha</text>
<text x="163.7" y="372" font-size="12" fill="#111111" font-weight="bold" text-anchor="middle" textLength="32.7" lengthAdjust="spacingAndGlyphs">Salida</text>
<text x="222.3" y="353" font-size="12" fill="#111111" font-weight="bold" text-anchor="middle" textLength="19" lengthAdjust="spacingAndGlyphs">Ent.</text>
<text x="222.9" y="372" font-size="12" fill="#111111" font-weight="bold" text-anchor="middle" textLength="28.6" lengthAdjust="spacingAndGlyphs">Trab.</text>
<text x="264.2" y="353" font-size="12" fill="#111111" font-weight="bold" text-anchor="middle" textLength="20" lengthAdjust="spacingAndGlyphs">Sal.</text>
<text x="265.9" y="372" font-size="12" fill="#111111" font-weight="bold" text-anchor="middle" textLength="29.3" lengthAdjust="spacingAndGlyphs">Trab.</text>
<text x="357.7" y="353" font-size="12" fill="#111111" font-weight="bold" text-anchor="middle" textLength="32" lengthAdjust="spacingAndGlyphs">Horas</text>
<text x="359.3" y="372" font-size="12" fill="#111111" font-weight="bold" text-anchor="middle" textLength="65" lengthAdjust="spacingAndGlyphs">Trabajados</text>
<text x="471.4" y="353" font-size="12" fill="#111111" font-weight="bold" text-anchor="middle" textLength="18" lengthAdjust="spacingAndGlyphs">Día</text>
<text x="675.6" y="353" font-size="12" fill="#111111" font-weight="bold" text-anchor="middle" textLength="88.7" lengthAdjust="spacingAndGlyphs">Observaciones</text>
<text x="61.0" y="391" font-size="13" fill="#333333" text-anchor="middle" textLength="51.7" lengthAdjust="spacingAndGlyphs">3/1/2023</text>
<text x="165.0" y="391" font-size="13" fill="#333333" text-anchor="middle" textLength="51.7" lengthAdjust="spacingAndGlyphs">3/1/2023</text>
<text x="224.0" y="391" font-size="13" fill="#333333" text-anchor="middle" textLength="30.5" lengthAdjust="spacingAndGlyphs">07:35</text>
<text x="267.0" y="391" font-size="13" fill="#333333" text-anchor="middle" textLength="30" lengthAdjust="spacingAndGlyphs">17:00</text>
<text x="428.5" y="391" font-size="13" fill="#333333" text-anchor="end" textLength="40" lengthAdjust="spacingAndGlyphs">8:25:00</text>
<text x="434.2" y="391" font-size="13" fill="#333333" text-anchor="start" textLength="43.6" lengthAdjust="spacingAndGlyphs">MARTES</text>
<text x="61.0" y="410" font-size="13" fill="#333333" text-anchor="middle" textLength="51.7" lengthAdjust="spacingAndGlyphs">4/1/2023</text>
<text x="165.0" y="410" font-size="13" fill="#333333" text-anchor="middle" textLength="51.7" lengthAdjust="spacingAndGlyphs">4/1/2023</text>
<text x="224.0" y="410" font-size="13" fill="#333333" text-anchor="middle" textLength="30.5" lengthAdjust="spacingAndGlyphs">07:42</text>
<text x="267.0" y="410" font-size="13" fill="#333333" text-anchor="middle" textLength="30" lengthAdjust="spacingAndGlyphs">17:00</text>
<text x="428.5" y="410" font-size="13" fill="#333333" text-anchor="end" textLength="40" lengthAdjust="spacingAndGlyphs">8:18:00</text>
<text x="434.2" y="410" font-size="13" fill="#333333" text-anchor="start" textLength="63.4" lengthAdjust="spacingAndGlyphs">MIÉRCOLES</text>
<text x="61.0" y="429" font-size="13" fill="#333333" text-anchor="middle" textLength="51.7" lengthAdjust="spacingAndGlyphs">5/1/2023</text>
<text x="165.0" y="429" font-size="13" fill="#333333" text-anchor="middle" textLength="51.7" lengthAdjust="spacingAndGlyphs">5/1/2023</text>
<text x="224.0" y="429" font-size="13" fill="#333333" text-anchor="middle" textLength="30.5" lengthAdjust="spacingAndGlyphs">07:42</text>
<text x="267.0" y="429" font-size="13" fill="#333333" text-anchor="middle" textLength="30" lengthAdjust="spacingAndGlyphs">17:00</text>
<text x="428.5" y="429" font-size="13" fill="#333333" text-anchor="end" textLength="40" lengthAdjust="spacingAndGlyphs">8:18:00</text>
<text x="434.2" y="429" font-size="13" fill="#333333" text-anchor="start" textLength="40.7" lengthAdjust="spacingAndGlyphs">JUEVES</text>
<text x="61.0" y="448" font-size="13" fill="#333333" text-anchor="middle" textLength="51.7" lengthAdjust="spacingAndGlyphs">6/1/2023</text>
<text x="165.0" y="448" font-size="13" fill="#333333" text-anchor="middle" textLength="51.7" lengthAdjust="spacingAndGlyphs">6/1/2023</text>
<text x="224.0" y="448" font-size="13" fill="#333333" text-anchor="middle" textLength="30.5" lengthAdjust="spacingAndGlyphs">07:37</text>
<text x="267.0" y="448" font-size="13" fill="#333333" text-anchor="middle" textLength="30" lengthAdjust="spacingAndGlyphs">17:00</text>
<text x="428.5" y="448" font-size="13" fill="#333333" text-anchor="end" textLength="40" lengthAdjust="spacingAndGlyphs">8:23:00</text>
<text x="434.2" y="448" font-size="13" fill="#333333" text-anchor="start" textLength="45.8" lengthAdjust="spacingAndGlyphs">VIERNES</text>
<text x="61.0" y="467" font-size="13" fill="#333333" text-anchor="middle" textLength="51.7" lengthAdjust="spacingAndGlyphs">9/1/2023</text>
<text x="165.0" y="467" font-size="13" fill="#333333" text-anchor="middle" textLength="51.7" lengthAdjust="spacingAndGlyphs">9/1/2023</text>
<text x="224.0" y="467" font-size="13" fill="#333333" text-anchor="middle" textLength="30.5" lengthAdjust="spacingAndGlyphs">07:40</text>
<text x="267.0" y="467" font-size="13" fill="#333333" text-anchor="middle" textLength="30" lengthAdjust="spacingAndGlyphs">17:02</text>
<text x="428.5" y="467" font-size="13" fill="#333333" text-anchor="end" textLength="40" lengthAdjust="spacingAndGlyphs">8:22:00</text>
<text x="434.2" y="467" font-size="13" fill="#333333" text-anchor="start" textLength="34" lengthAdjust="spacingAndGlyphs">LUNES</text>
<text x="61.0" y="486" font-size="13" fill="#333333" text-anchor="middle" textLength="57" lengthAdjust="spacingAndGlyphs">10/1/2023</text>
<text x="165.0" y="486" font-size="13" fill="#333333" text-anchor="middle" textLength="57" lengthAdjust="spacingAndGlyphs">10/1/2023</text>
<text x="224.0" y="486" font-size="13" fill="#333333" text-anchor="middle" textLength="30.5" lengthAdjust="spacingAndGlyphs">07:52</text>
<text x="267.0" y="486" font-size="13" fill="#333333" text-anchor="middle" textLength="30" lengthAdjust="spacingAndGlyphs">17:00</text>
<text x="428.5" y="486" font-size="13" fill="#333333" text-anchor="end" textLength="40" lengthAdjust="spacingAndGlyphs">8:08:00</text>
<text x="434.2" y="486" font-size="13" fill="#333333" text-anchor="start" textLength="43.6" lengthAdjust="spacingAndGlyphs">MARTES</text>
<text x="61.0" y="505" font-size="13" fill="#333333" text-anchor="middle" textLength="57" lengthAdjust="spacingAndGlyphs">11/1/2023</text>
<text x="165.0" y="505" font-size="13" fill="#333333" text-anchor="middle" textLength="57" lengthAdjust="spacingAndGlyphs">11/1/2023</text>
<text x="224.0" y="505" font-size="13" fill="#333333" text-anchor="middle" textLength="30.5" lengthAdjust="spacingAndGlyphs">07:38</text>
<text x="267.0" y="505" font-size="13" fill="#333333" text-anchor="middle" textLength="30" lengthAdjust="spacingAndGlyphs">17:00</text>
<text x="428.5" y="505" font-size="13" fill="#333333" text-anchor="end" textLength="40" lengthAdjust="spacingAndGlyphs">8:22:00</text>
<text x="434.2" y="505" font-size="13" fill="#333333" text-anchor="start" textLength="63.4" lengthAdjust="spacingAndGlyphs">MIÉRCOLES</text>
<text x="61.0" y="524" font-size="13" fill="#333333" text-anchor="middle" textLength="57" lengthAdjust="spacingAndGlyphs">12/1/2023</text>
<text x="165.0" y="524" font-size="13" fill="#333333" text-anchor="middle" textLength="57" lengthAdjust="spacingAndGlyphs">12/1/2023</text>
<text x="224.0" y="524" font-size="13" fill="#333333" text-anchor="middle" textLength="30.5" lengthAdjust="spacingAndGlyphs">07:53</text>
<text x="267.0" y="524" font-size="13" fill="#333333" text-anchor="middle" textLength="30" lengthAdjust="spacingAndGlyphs">17:00</text>
<text x="428.5" y="524" font-size="13" fill="#333333" text-anchor="end" textLength="40" lengthAdjust="spacingAndGlyphs">8:07:00</text>
<text x="434.2" y="524" font-size="13" fill="#333333" text-anchor="start" textLength="40.7" lengthAdjust="spacingAndGlyphs">JUEVES</text>
<text x="61.0" y="543" font-size="13" fill="#333333" text-anchor="middle" textLength="57" lengthAdjust="spacingAndGlyphs">13/1/2023</text>
<text x="165.0" y="543" font-size="13" fill="#333333" text-anchor="middle" textLength="57" lengthAdjust="spacingAndGlyphs">13/1/2023</text>
<text x="224.0" y="543" font-size="13" fill="#333333" text-anchor="middle" textLength="30.5" lengthAdjust="spacingAndGlyphs">07:40</text>
<text x="267.0" y="543" font-size="13" fill="#333333" text-anchor="middle" textLength="30" lengthAdjust="spacingAndGlyphs">17:00</text>
<text x="428.5" y="543" font-size="13" fill="#333333" text-anchor="end" textLength="40" lengthAdjust="spacingAndGlyphs">8:20:00</text>
<text x="434.2" y="543" font-size="13" fill="#333333" text-anchor="start" textLength="45.8" lengthAdjust="spacingAndGlyphs">VIERNES</text>
<text x="61.0" y="562" font-size="13" fill="#333333" text-anchor="middle" textLength="57" lengthAdjust="spacingAndGlyphs">16/1/2023</text>
<text x="165.0" y="562" font-size="13" fill="#333333" text-anchor="middle" textLength="57" lengthAdjust="spacingAndGlyphs">16/1/2023</text>
<text x="224.0" y="562" font-size="13" fill="#333333" text-anchor="middle" textLength="30.5" lengthAdjust="spacingAndGlyphs">07:41</text>
<text x="267.0" y="562" font-size="13" fill="#333333" text-anchor="middle" textLength="30" lengthAdjust="spacingAndGlyphs">17:01</text>
<text x="428.5" y="562" font-size="13" fill="#333333" text-anchor="end" textLength="40" lengthAdjust="spacingAndGlyphs">8:20:00</text>
<text x="434.2" y="562" font-size="13" fill="#333333" text-anchor="start" textLength="34" lengthAdjust="spacingAndGlyphs">LUNES</text>
<text x="61.0" y="581" font-size="13" fill="#333333" text-anchor="middle" textLength="57" lengthAdjust="spacingAndGlyphs">17/1/2023</text>
<text x="165.0" y="581" font-size="13" fill="#333333" text-anchor="middle" textLength="57" lengthAdjust="spacingAndGlyphs">17/1/2023</text>
<text x="224.0" y="581" font-size="13" fill="#333333" text-anchor="middle" textLength="30.5" lengthAdjust="spacingAndGlyphs">07:52</text>
<text x="267.0" y="581" font-size="13" fill="#333333" text-anchor="middle" textLength="30" lengthAdjust="spacingAndGlyphs">17:00</text>
<text x="428.5" y="581" font-size="13" fill="#333333" text-anchor="end" textLength="40" lengthAdjust="spacingAndGlyphs">8:08:00</text>
<text x="434.2" y="581" font-size="13" fill="#333333" text-anchor="start" textLength="43.6" lengthAdjust="spacingAndGlyphs">MARTES</text>
<text x="61.0" y="600" font-size="13" fill="#333333" text-anchor="middle" textLength="57" lengthAdjust="spacingAndGlyphs">18/1/2023</text>
<text x="165.0" y="600" font-size="13" fill="#333333" text-anchor="middle" textLength="57" lengthAdjust="spacingAndGlyphs">18/1/2023</text>
<text x="224.0" y="600" font-size="13" fill="#333333" text-anchor="middle" textLength="30.5" lengthAdjust="spacingAndGlyphs">07:38</text>
<text x="267.0" y="600" font-size="13" fill="#333333" text-anchor="middle" textLength="30" lengthAdjust="spacingAndGlyphs">13:23</text>
<text x="428.5" y="600" font-size="13" fill="#333333" text-anchor="end" textLength="40" lengthAdjust="spacingAndGlyphs">4:45:00</text>
<text x="434.2" y="600" font-size="13" fill="#333333" text-anchor="start" textLength="63.4" lengthAdjust="spacingAndGlyphs">MIÉRCOLES</text>
<text x="61.0" y="619" font-size="13" fill="#333333" text-anchor="middle" textLength="57" lengthAdjust="spacingAndGlyphs">19/1/2023</text>
<text x="165.0" y="619" font-size="13" fill="#333333" text-anchor="middle" textLength="57" lengthAdjust="spacingAndGlyphs">19/1/2023</text>
<text x="224.0" y="619" font-size="13" fill="#333333" text-anchor="middle" textLength="30.5" lengthAdjust="spacingAndGlyphs">07:39</text>
<text x="267.0" y="619" font-size="13" fill="#333333" text-anchor="middle" textLength="30" lengthAdjust="spacingAndGlyphs">17:00</text>
<text x="428.5" y="619" font-size="13" fill="#333333" text-anchor="end" textLength="40" lengthAdjust="spacingAndGlyphs">8:21:00</text>
<text x="434.2" y="619" font-size="13" fill="#333333" text-anchor="start" textLength="40.7" lengthAdjust="spacingAndGlyphs">JUEVES</text>
<text x="61.0" y="638" font-size="13" fill="#333333" text-anchor="middle" textLength="57" lengthAdjust="spacingAndGlyphs">20/1/2023</text>
<text x="165.0" y="638" font-size="13" fill="#333333" text-anchor="middle" textLength="57" lengthAdjust="spacingAndGlyphs">20/1/2023</text>
<text x="224.0" y="638" font-size="13" fill="#333333" text-anchor="middle" textLength="30.5" lengthAdjust="spacingAndGlyphs">07:43</text>
<text x="267.0" y="638" font-size="13" fill="#333333" text-anchor="middle" textLength="30" lengthAdjust="spacingAndGlyphs">17:00</text>
<text x="428.5" y="638" font-size="13" fill="#333333" text-anchor="end" textLength="40" lengthAdjust="spacingAndGlyphs">8:17:00</text>
<text x="434.2" y="638" font-size="13" fill="#333333" text-anchor="start" textLength="45.8" lengthAdjust="spacingAndGlyphs">VIERNES</text>
<text x="61.0" y="657" font-size="13" fill="#333333" text-anchor="middle" textLength="57" lengthAdjust="spacingAndGlyphs">23/1/2023</text>
<text x="165.0" y="657" font-size="13" fill="#333333" text-anchor="middle" textLength="57" lengthAdjust="spacingAndGlyphs">23/1/2023</text>
<text x="224.0" y="657" font-size="13" fill="#333333" text-anchor="middle" textLength="30.5" lengthAdjust="spacingAndGlyphs">07:38</text>
<text x="267.0" y="657" font-size="13" fill="#333333" text-anchor="middle" textLength="30" lengthAdjust="spacingAndGlyphs">17:01</text>
<text x="428.5" y="657" font-size="13" fill="#333333" text-anchor="end" textLength="40" lengthAdjust="spacingAndGlyphs">8:23:00</text>
<text x="434.2" y="657" font-size="13" fill="#333333" text-anchor="start" textLength="34" lengthAdjust="spacingAndGlyphs">LUNES</text>
<text x="61.0" y="676" font-size="13" fill="#333333" text-anchor="middle" textLength="57" lengthAdjust="spacingAndGlyphs">24/1/2023</text>
<text x="165.0" y="676" font-size="13" fill="#333333" text-anchor="middle" textLength="57" lengthAdjust="spacingAndGlyphs">24/1/2023</text>
<text x="224.0" y="676" font-size="13" fill="#333333" text-anchor="middle" textLength="30.5" lengthAdjust="spacingAndGlyphs">07:54</text>
<text x="267.0" y="676" font-size="13" fill="#333333" text-anchor="middle" textLength="30" lengthAdjust="spacingAndGlyphs">17:00</text>
<text x="428.5" y="676" font-size="13" fill="#333333" text-anchor="end" textLength="40" lengthAdjust="spacingAndGlyphs">8:06:00</text>
<text x="434.2" y="676" font-size="13" fill="#333333" text-anchor="start" textLength="43.6" lengthAdjust="spacingAndGlyphs">MARTES</text>
<text x="514" y="599.9" font-size="13" fill="#333333" text-anchor="start" textLength="223.8" lengthAdjust="spacingAndGlyphs">PERMISO CON CARGO A VACACIONES</text>
<line x1="1344.5" y1="219" x2="1344.5" y2="678.5" stroke="#a8a8a8" stroke-width="1"/>
<line x1="0" y1="678.5" x2="1345" y2="678.5" stroke="#a8a8a8" stroke-width="1"/>
<rect x="1344" y="203" width="22" height="475" fill="#e6e6e6"/>
<rect x="1346.5" y="219" width="18" height="459" fill="#f0f0f0"/>
<rect x="1348.5" y="205.5" width="14" height="14" fill="#ffffff" stroke="#a8a8a8" stroke-width="1"/>
<g shape-rendering="geometricPrecision">
<path d="M1351.5 215 L1359.5 215 L1355.5 210.5 Z" fill="#222"/>
</g>
<rect x="1348.5" y="317.5" width="14" height="15.5" fill="#ffffff" stroke="#a8a8a8" stroke-width="1"/>
<rect x="1348.5" y="664.5" width="14" height="14" fill="#ffffff" stroke="#a8a8a8" stroke-width="1"/>
<g shape-rendering="geometricPrecision">
<path d="M1351.5 669 L1359.5 669 L1355.5 673.5 Z" fill="#222"/>
</g>
<rect x="0" y="679" width="1366" height="27" fill="#e6e6e6"/>
<g shape-rendering="geometricPrecision">
<path d="M31 688 L27.5 691.5 L31 695 Z" fill="#b8b8b8"/>
<path d="M56 688 L59.5 691.5 L56 695 Z" fill="#b8b8b8"/>
</g>
<rect x="100.5" y="678" width="135" height="24.5" fill="#ffffff"/>
<line x1="100.5" y1="679" x2="100.5" y2="702" stroke="#c6c6c6" stroke-width="1"/>
<line x1="235.5" y1="679" x2="235.5" y2="702" stroke="#c6c6c6" stroke-width="1"/>
<rect x="100" y="701" width="136" height="2" fill="#217346"/>
<text x="112.7" y="696" font-size="12.5" fill="#217346" font-weight="bold" text-anchor="start" textLength="110.2" lengthAdjust="spacingAndGlyphs">Entradas y Salidas</text>
<text x="248.7" y="696" font-size="12.5" fill="#444" text-anchor="start" textLength="32.2" lengthAdjust="spacingAndGlyphs">Hoja1</text>
<line x1="294.5" y1="683" x2="294.5" y2="701" stroke="#b0b0b0" stroke-width="1"/>
<g shape-rendering="geometricPrecision">
<circle cx="336.2" cy="691.5" r="7.3" fill="none" stroke="#777" stroke-width="1.1"/>
<path d="M336.2 687.5 L336.2 695.5 M332.2 691.5 L340.2 691.5" fill="none" stroke="#777" stroke-width="1.3"/>
<circle cx="820" cy="687.5" r="0.8" fill="#aaa"/>
<circle cx="820" cy="691.5" r="0.8" fill="#aaa"/>
<circle cx="820" cy="695.5" r="0.8" fill="#aaa"/>
</g>
<rect x="836" y="685" width="509" height="15.5" fill="#f0f0f0"/>
<rect x="836.5" y="685.5" width="14" height="14.5" fill="#ffffff" stroke="#a8a8a8" stroke-width="1"/>
<rect x="850.5" y="685.5" width="305" height="14.5" fill="#ffffff" stroke="#a8a8a8" stroke-width="1"/>
<rect x="1330.5" y="685.5" width="14" height="14.5" fill="#ffffff" stroke="#a8a8a8" stroke-width="1"/>
<g shape-rendering="geometricPrecision">
<path d="M846 688.5 L841.5 692.75 L846 697 Z" fill="#222"/>
<path d="M1335 688.5 L1339.5 692.75 L1335 697 Z" fill="#222"/>
</g>
<rect x="0" y="706" width="1366" height="18" fill="#f3f3f3"/>
<line x1="0" y1="705.5" x2="1366" y2="705.5" stroke="#d8d8d8" stroke-width="1"/>
<text x="11.3" y="721.6" font-size="11" fill="#333" text-anchor="start" textLength="23.2" lengthAdjust="spacingAndGlyphs">Listo</text>
<text x="51.5" y="721.6" font-size="11" fill="#333" text-anchor="start" textLength="139.2" lengthAdjust="spacingAndGlyphs">Referencias circulares: F577</text>
<g shape-rendering="geometricPrecision">
<path d="M213.5 713 A5.5 5.5 0 1 0 220 722" fill="none" stroke="#444" stroke-width="1.2" stroke-dasharray="1.5 1.3"/>
<path d="M217.5 709.5 L217.5 715.5 L221.5 715.5" fill="none" stroke="#444" stroke-width="1.2"/>
<path d="M220.5 717 L226 722.8 M226 717 L220.5 722.8" fill="none" stroke="#333" stroke-width="1.6"/>
</g>
<text x="229.3" y="721" font-size="11" fill="#222" font-weight="bold" text-anchor="start" textLength="191" lengthAdjust="spacingAndGlyphs">Accesibilidad: es necesario investigar</text>
<rect x="1066" y="706" width="40" height="18" fill="#c8c8c8"/>
<rect x="1078.5" y="710.5" width="13.5" height="12" fill="none" stroke="#555" stroke-width="1"/>
<line x1="1083.0" y1="710.5" x2="1083.0" y2="722.5" stroke="#555" stroke-width="1"/>
<line x1="1087.5" y1="710.5" x2="1087.5" y2="722.5" stroke="#555" stroke-width="1"/>
<line x1="1078.5" y1="713.5" x2="1092" y2="713.5" stroke="#555" stroke-width="1"/>
<line x1="1078.5" y1="716.5" x2="1092" y2="716.5" stroke="#555" stroke-width="1"/>
<line x1="1078.5" y1="719.5" x2="1092" y2="719.5" stroke="#555" stroke-width="1"/>
<rect x="1119.5" y="710.5" width="13" height="12" fill="none" stroke="#555" stroke-width="1"/>
<rect x="1122.5" y="713.5" width="7" height="6" fill="none" stroke="#555" stroke-width="1"/>
<line x1="1123.5" y1="716" x2="1128.5" y2="716" stroke="#555" stroke-width="1"/>
<line x1="1123.5" y1="718" x2="1128.5" y2="718" stroke="#555" stroke-width="1"/>
<path d="M1158.5 722.5 L1158.5 710.5 L1172.5 710.5 L1172.5 722.5 M1165.5 710.5 L1165.5 716.5 L1158.5 716.5" fill="none" stroke="#555" stroke-width="1"/>
<line x1="1192" y1="716.5" x2="1200" y2="716.5" stroke="#555" stroke-width="1"/>
<line x1="1205" y1="716.5" x2="1305" y2="716.5" stroke="#777" stroke-width="1"/>
<rect x="1253" y="710.5" width="5" height="12.5" fill="#444"/>
<line x1="1310" y1="716.5" x2="1318" y2="716.5" stroke="#555" stroke-width="1"/>
<line x1="1314.5" y1="712" x2="1314.5" y2="721" stroke="#555" stroke-width="1"/>
<text x="1331.6" y="721.3" font-size="11" fill="#333" text-anchor="start" textLength="25.7" lengthAdjust="spacingAndGlyphs">100%</text>
</svg>
</body></html>
